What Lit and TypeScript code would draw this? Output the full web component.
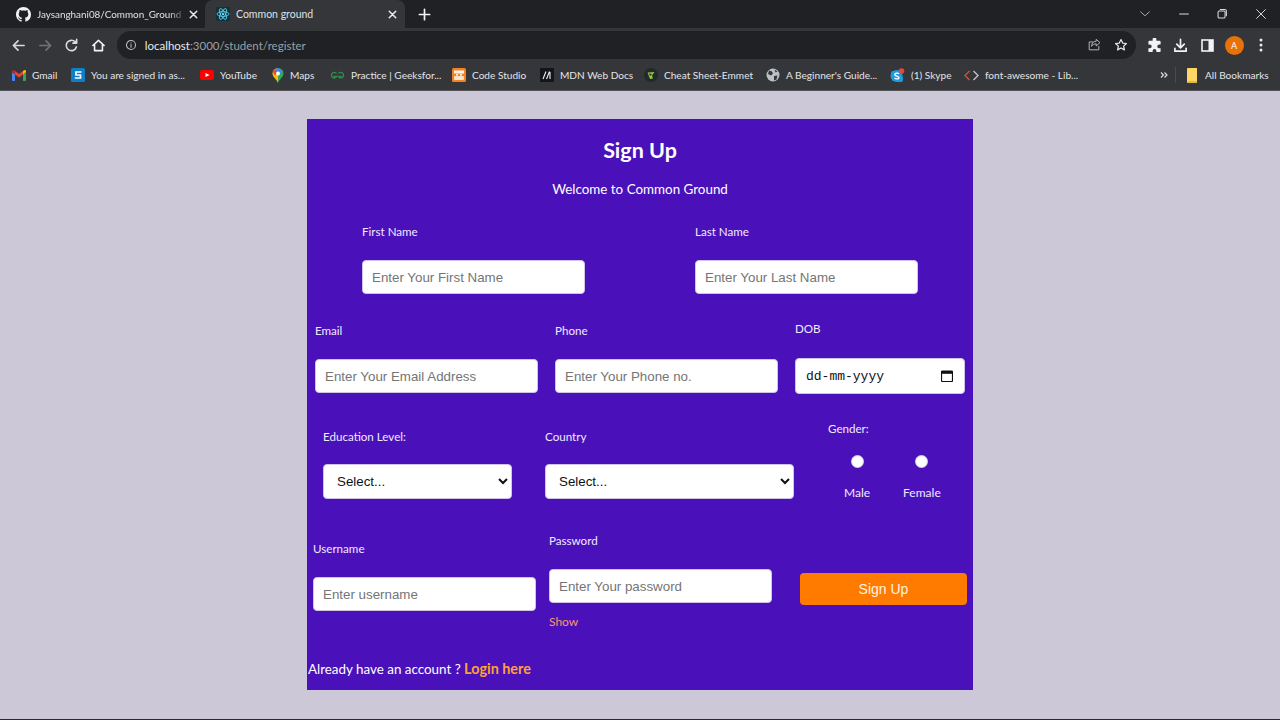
import { LitElement, html, css, svg } from 'lit';
import { customElement } from 'lit/decorators.js';

const stroke = (d: unknown, size = 16, color = '#dadce0', sw = 1.6) => html`<svg width=${size} height=${size} viewBox="0 0 16 16" fill="none" stroke=${color} stroke-width=${sw} stroke-linecap="round" stroke-linejoin="round">${d}</svg>`;

const icons = {
  github: html`<svg width="15" height="15" viewBox="0 0 16 16" fill="#f1f3f4"><path d="M8 0C3.58 0 0 3.58 0 8c0 3.54 2.29 6.53 5.47 7.59.4.07.55-.17.55-.38 0-.19-.01-.82-.01-1.49-2.01.37-2.53-.49-2.69-.94-.09-.23-.48-.94-.82-1.13-.28-.15-.68-.52-.01-.53.63-.01 1.08.58 1.23.82.72 1.21 1.87.87 2.33.66.07-.52.28-.87.51-1.07-1.78-.2-3.64-.89-3.64-3.95 0-.87.31-1.59.82-2.15-.08-.2-.36-1.02.08-2.12 0 0 .67-.21 2.2.82.64-.18 1.32-.27 2-.27s1.36.09 2 .27c1.53-1.04 2.2-.82 2.2-.82.44 1.1.16 1.92.08 2.12.51.56.82 1.27.82 2.15 0 3.07-1.87 3.75-3.65 3.95.29.25.54.73.54 1.48 0 1.07-.01 1.93-.01 2.2 0 .21.15.46.55.38A8.01 8.01 0 0 0 16 8c0-4.42-3.58-8-8-8z"/></svg>`,
  react: html`<svg width="14" height="14" viewBox="0 0 14 14"><rect width="14" height="14" fill="#14323c"/><g fill="none" stroke="#61dafb" stroke-width=".8"><ellipse cx="7" cy="7" rx="6" ry="2.4"/><ellipse cx="7" cy="7" rx="6" ry="2.4" transform="rotate(60 7 7)"/><ellipse cx="7" cy="7" rx="6" ry="2.4" transform="rotate(120 7 7)"/></g><circle cx="7" cy="7" r="1.2" fill="#61dafb"/></svg>`,
  close: stroke(svg`<path d="M4 4l8 8M12 4l-8 8"/>`, 13, '#e8eaed', 1.8),
  plus: stroke(svg`<path d="M8 2.5v11M2.5 8h11"/>`, 15, '#f1f3f4', 1.8),
  chevron: stroke(svg`<path d="M3 5.5l5 4.5 5-4.5"/>`, 14, '#a8abb0', 1.1),
  min: stroke(svg`<path d="M3 8h10"/>`, 14, '#dadce0', 1.2),
  max: stroke(svg`<rect x="3.5" y="4.5" width="8" height="8" rx="1.5"/><path d="M6 2.8h5.2a1.8 1.8 0 0 1 1.8 1.8V10"/>`, 14, '#dadce0', 1.2),
  winClose: stroke(svg`<path d="M3 3l10 10M13 3L3 13"/>`, 14, '#dadce0', 1.1),
  back: stroke(svg`<path d="M14 8H2.5M7.5 3l-5 5 5 5"/>`, 15, '#dadce0', 1.7),
  forward: stroke(svg`<path d="M2 8h11.5M8.5 3l5 5-5 5"/>`, 15, '#6f7276', 1.7),
  reload: stroke(svg`<path d="M13.2 9.5A5.5 5.5 0 1 1 12 4.3"/><path d="M13.5 1.5v4h-4" fill="#dadce0"/>`, 15, '#dadce0', 1.7),
  home: stroke(svg`<path d="M2 8l6-5.5L14 8M3.8 7v6.5h8.4V7"/>`, 15, '#f1f3f4', 1.7),
  info: stroke(svg`<circle cx="8" cy="8" r="6"/><path d="M8 7.5v3.5M8 5v.4"/>`, 12, '#bdc1c6', 1.4),
  share: stroke(svg`<path d="M13.5 9.5v4h-11v-9h4"/><path d="M14.5 5L10.5 1.5v2.2C7 3.8 5.5 6 5.2 9.5 6.5 7.5 8 6.7 10.5 6.7v2z"/>`, 14, '#b4b8bd', 1.1),
  star: stroke(svg`<path d="M8 1.8l1.9 4 4.3.5-3.2 3 .9 4.3L8 11.4l-3.9 2.2.9-4.3-3.2-3 4.3-.5z"/>`, 14, '#e8eaed', 1.4),
  puzzle: html`<svg width="15" height="15" viewBox="0 0 16 16" fill="#f1f3f4"><path d="M6 1.5a2 2 0 0 1 4 0V3h3.5a1 1 0 0 1 1 1v3H13a2 2 0 0 0 0 4h1.5v3a1 1 0 0 1-1 1H10v-1.3a2 2 0 0 0-4 0V15H2.5a1 1 0 0 1-1-1v-3.2H3a2 2 0 0 0 0-4H1.5V4a1 1 0 0 1 1-1H6z"/></svg>`,
  download: stroke(svg`<path d="M8 1.5V10M4 6.5L8 10.5l4-4M2 11v3h12v-3"/>`, 15, '#f1f3f4', 1.8),
  sidebar: html`<svg width="13" height="13" viewBox="0 0 13 13"><rect x="1" y="1" width="11" height="11" fill="none" stroke="#f1f3f4" stroke-width="1.6"/><rect x="7.5" y="1" width="4.5" height="11" fill="#f1f3f4"/></svg>`,
  dots: html`<svg width="4" height="14" viewBox="0 0 4 14" fill="#e8eaed"><circle cx="2" cy="2" r="1.5"/><circle cx="2" cy="7" r="1.5"/><circle cx="2" cy="12" r="1.5"/></svg>`,
  gmail: html`<svg width="14" height="11" viewBox="0 0 14 11"><path d="M0 2v8a1 1 0 0 0 1 1h2V4.5z" fill="#4285f4"/><path d="M14 2v8a1 1 0 0 1-1 1h-2V4.5z" fill="#34a853"/><path d="M0 2l3 2.5V1L1.8.2C1 -.3 0 .5 0 1.4z" fill="#c5221f"/><path d="M3 1v3.500L7 7.500l4-3V1L7 4z" fill="#ea4335"/><path d="M14 2l-3 2.500V1l1.200-.8c.8-.5 1.800.3 1.800 1.200z" fill="#fbbc04"/></svg>`,
  sblue: html`<svg width="14" height="14" viewBox="0 0 14 14"><rect width="14" height="14" rx="1.500" fill="#0b7fc7"/><path d="M10.500 4H5v3h4.500v3H3.800" fill="none" stroke="#fff" stroke-width="1.700"/></svg>`,
  youtube: html`<svg width="14" height="10" viewBox="0 0 14 10"><rect width="14" height="10" rx="2.500" fill="#f00"/><path d="M5.500 3l4 2-4 2z" fill="#fff"/></svg>`,
  maps: html`<svg width="12" height="15" viewBox="0 0 12 15"><path d="M6 0a5.500 5.500 0 0 1 5.500 5.500c0 3.500-4 5.500-5.500 9.500z" fill="#34a853"/><path d="M6 0A5.500 5.500 0 0 0 .5 5.500c0 3.500 4 5.500 5.500 9.500z" fill="#fbbc04"/><path d="M2 2l4-2 5 3-3 3z" fill="#4285f4"/><path d="M.8 3.500L3 1.500l3 3-3 3z" fill="#ea4335"/><circle cx="6" cy="5.500" r="2" fill="#fff"/></svg>`,
  gfg: html`<svg width="15" height="10" viewBox="0 0 15 10" fill="none" stroke="#2f8d46" stroke-width="1.300"><path d="M6.500 3.500A2.800 2.800 0 1 0 6.700 6.500H3.500M8.500 3.500A2.800 2.800 0 1 1 8.300 6.500h3.200"/></svg>`,
  codestudio: html`<svg width="14" height="14" viewBox="0 0 14 14"><rect width="14" height="14" rx="1.500" fill="#f58220"/><rect x="2" y="2.500" width="10" height="3" fill="#fff" opacity=".9"/><rect x="2" y="8" width="10" height="4" rx="1" fill="#fbe3c8"/><circle cx="5" cy="6.800" r="1" fill="#fff"/><circle cx="9" cy="6.800" r="1" fill="#fff"/></svg>`,
  mdn: html`<svg width="14" height="14" viewBox="0 0 14 14"><rect width="14" height="14" fill="#15141a"/><path d="M3 11L6 3.500M6.500 11l3-7.500M10 4v7" stroke="#f0f0f4" stroke-width="1.100" fill="none"/></svg>`,
  emmet: html`<svg width="14" height="14" viewBox="0 0 14 14"><circle cx="7" cy="7" r="7" fill="#23282b"/><path d="M3.500 4.500l7 -.5L8 7.500l1 3-3 .5z" fill="#8ec63f"/><path d="M5 5.500l3 .5-2 2z" fill="#23282b"/></svg>`,
  globe: html`<svg width="14" height="14" viewBox="0 0 14 14"><circle cx="7" cy="7" r="6.500" fill="#bdc1c6"/><path d="M3 2.500l3 1 1 2-2 2-3-1.500zM8 8l3.500-.5-1 4-2.500 1zM8.500 1.500l3 2-2 1z" fill="#35363a"/></svg>`,
  skype: html`<svg width="15" height="15" viewBox="0 0 15 15"><circle cx="6.500" cy="8" r="6" fill="#1d9be0"/><rect x="1" y="3" width="6" height="6" rx="2" fill="#1d9be0"/><rect x="6" y="8" width="7" height="6" rx="2" fill="#1d9be0"/><path d="M9 5.800C8 4.800 4.500 5 4.800 6.800 5 8.300 9.200 7.800 9 9.800 8.800 11.200 5.500 11 4.500 10" fill="none" stroke="#fff" stroke-width="1.300"/><circle cx="11.500" cy="3" r="2.800" fill="#e8453c"/></svg>`,
  code: html`<svg width="15" height="11" viewBox="0 0 15 11" fill="none" stroke-width="1.400"><path d="M5.500 1L1 5.500 5.500 10" stroke="#c2573a"/><path d="M9.500 1L14 5.500 9.500 10" stroke="#bdc1c6"/></svg>`,
  folder: html`<svg width="11" height="15" viewBox="0 0 11 15"><path d="M0 1a1 1 0 0 1 1-1h9v14a1 1 0 0 1-1 1H1a1 1 0 0 1-1-1z" fill="#fdd663"/><path d="M0 14l2-1h8v1a1 1 0 0 1-1 1H1z" fill="#e0b93f"/></svg>`,
  more: html`<svg width="8" height="8" viewBox="0 0 8 8" fill="none" stroke="#dadce0" stroke-width="1.200"><path d="M1 1.500L3.500 4 1 6.500M4.500 1.500L7 4 4.500 6.500"/></svg>`,
  calendar: html`<svg width="12" height="12" viewBox="0 0 12 12"><path d="M1.500 1h9a1 1 0 0 1 1 1v8.500a1 1 0 0 1-1 1h-9a1 1 0 0 1-1-1V2a1 1 0 0 1 1-1z" fill="none" stroke="#111" stroke-width="1.200"/><rect x=".5" y="1" width="11" height="2.800" fill="#111"/></svg>`,
};

// width is the slot from this icon to the next one
const bookmarks = [
  { icon: icons.gmail, label: 'Gmail', width: 59 },
  { icon: icons.sblue, label: 'You are signed in as...', width: 129 },
  { icon: icons.youtube, label: 'YouTube', width: 72 },
  { icon: icons.maps, label: 'Maps', width: 58 },
  { icon: icons.gfg, label: 'Practice | Geeksfor...', width: 122 },
  { icon: icons.codestudio, label: 'Code Studio', width: 88 },
  { icon: icons.mdn, label: 'MDN Web Docs', width: 104 },
  { icon: icons.emmet, label: 'Cheat Sheet-Emmet', width: 122 },
  { icon: icons.globe, label: "A Beginner's Guide...", width: 124 },
  { icon: icons.skype, label: '(1) Skype', width: 74 },
  { icon: icons.code, label: 'font-awesome - Lib...', width: 120 },
];

@customElement('app-root')
export class AppRoot extends LitElement {
  static styles = css`
    :host {
      display: flex;
      flex-direction: column;
      height: 720px;
      overflow: hidden;
      background: #cdc8d7;
      font-family: Lato, 'Open Sans', sans-serif;
      box-shadow: inset 0 -1px 0 #2a2a2e;
    }

    /* browser chrome */
    .tabstrip {
      display: flex;
      align-items: center;
      height: 28px;
      background: #202124;
      color: #dee1e6;
      font-size: 10.5px;
    }
    .tab {
      display: flex;
      align-items: center;
      height: 28px;
      box-sizing: border-box;
    }
    .tab-idle { width: 205px; padding: 0 5px 0 16px; }
    .tab-active {
      width: 200px;
      padding: 0 6px 0 11px;
      background: #35363a;
      border-radius: 8px 8px 0 0;
    }
    .tab-title {
      flex: 1;
      margin-left: 6px;
      white-space: nowrap;
    }
    .tab-idle .tab-title {
      font-size: 9.9px;
      -webkit-mask-image: linear-gradient(90deg, #000 88%, transparent);
      mask-image: linear-gradient(90deg, #000 88%, transparent);
    }
    .new-tab { margin-left: 12px; display: flex; }
    .win-controls { margin-left: auto; display: flex; }
    .win-btn { width: 38.5px; display: flex; justify-content: center; }

    .toolbar {
      display: flex;
      align-items: center;
      height: 34px;
      padding-left: 5px;
      background: #35363a;
    }
    .tool-btn {
      width: 26.7px;
      display: flex;
      justify-content: center;
      align-items: center;
    }
    .omnibox {
      display: flex;
      align-items: center;
      width: 1019px;
      height: 28px;
      margin-left: 5px;
      box-sizing: border-box;
      padding: 0 8px;
      border-radius: 14px;
      background: #202124;
      font-size: 11.5px;
      color: #9aa0a6;
    }
    .url { margin-left: 8px; }
    .url b { font-weight: 400; color: #e8eaed; }
    .omni-end { margin-left: auto; display: flex; gap: 13px; }
    .tools-end { display: flex; align-items: center; margin-left: 5px; }
    .avatar {
      width: 19px;
      height: 19px;
      border-radius: 50%;
      background: #e8710a;
      color: #fff;
      font-size: 9px;
      display: flex;
      align-items: center;
      justify-content: center;
    }

    .bookmarks {
      display: flex;
      align-items: center;
      height: 28px;
      padding: 0 0 2px 12px;
      box-sizing: border-box;
      background: #35363a;
      box-shadow: 0 1px 0 #55565a;
      color: #e3e5e8;
      font-size: 10.1px;
    }
    .bm {
      display: flex;
      align-items: center;
      gap: 6px;
      white-space: nowrap;
      overflow: hidden;
      flex: none;
    }
    .bm svg { flex: none; }
    .bm-more { margin-left: 76px; display: flex; }
    .bm-sep { width: 1px; height: 16px; margin-left: 7px; background: #4a4b4f; }
    .bm-all { display: flex; align-items: center; gap: 7px; margin-left: 11px; }

    /* page */
    .page {
      flex: 1;
      display: flex;
      justify-content: center;
      align-items: flex-start;
      padding-top: 29px;
    }
    .card {
      width: 666px;
      height: 571px;
      background: #4a11bb;
      color: #fff;
      display: flex;
      flex-direction: column;
    }
    .title {
      margin: 18px 0 0;
      font-size: 21.5px;
      line-height: 27px;
      font-weight: 700;
      text-align: center;
    }
    .welcome {
      margin: 15px 0 0;
      font-size: 13.4px;
      line-height: 20px;
      text-align: center;
    }
    .row { display: flex; align-items: flex-start; }
    .row-name { margin-top: 23px; padding-left: 55px; gap: 110px; }
    .row-contact { margin-top: 25px; padding-left: 8px; gap: 17px; }
    .row-meta { margin-top: 25px; padding-left: 16px; }
    .row-account { margin-top: 28px; padding-left: 6px; }

    .field { display: flex; flex-direction: column; width: 223px; }
    .field label, .gender-label {
      font-size: 11.6px;
      line-height: 20px;
      color: #f1e9ff;
    }
    .field label { margin-bottom: 18px; }
    .low { margin-top: 2px; }
    .low-8 { margin-top: 8px; }
    .dob label { margin-bottom: 19px; }
    .edu label, .country label { margin-bottom: 17px; }

    input[type='text'], input[type='password'], select, .date {
      box-sizing: border-box;
      width: 100%;
      height: 34px;
      margin: 0;
      padding: 0 9px;
      border: 1px solid #cfc4e8;
      border-radius: 4px;
      background: #fff;
      font-family: 'Liberation Sans', Arial, sans-serif;
      font-size: 13.33px;
      color: #111;
      outline: none;
    }
    input::placeholder { color: #757575; opacity: 1; }
    select { height: 35px; }
    .date {
      height: 36px;
      display: flex;
      align-items: center;
      justify-content: space-between;
      padding: 0 11px 0 10px;
      font-family: 'Liberation Mono', monospace;
      font-size: 13px;
    }

    .edu { width: 189px; }
    .country { width: 249px; margin-left: 33px; }
    .dob { width: 170px; }
    .gender { margin-left: 34px; display: flex; flex-direction: column; }
    .options { display: flex; gap: 33px; margin: 17px 0 0 16px; }
    .option {
      display: flex;
      flex-direction: column;
      align-items: center;
      gap: 16px;
      font-size: 12px;
      line-height: 20px;
      color: #f1e9ff;
    }
    .option input {
      appearance: none;
      width: 11px;
      height: 11px;
      margin: 0;
      border-radius: 50%;
      background: #fff;
      box-shadow: 0 0 0 1px #d8cdf0;
    }
    .password { margin-left: 13px; }
    .show {
      margin-top: 9px;
      font-size: 12px;
      line-height: 20px;
      color: #f59a6a;
    }
    .signup {
      width: 167px;
      height: 32px;
      margin: 42px 0 0 28px;
      border: none;
      border-radius: 4px;
      background: #ff7b00;
      color: #fff3e6;
      font-family: 'Liberation Sans', Arial, sans-serif;
      font-size: 14px;
    }
    .login {
      margin: 27px 0 0 1px;
      font-size: 13.4px;
      line-height: 20px;
    }
    .login a { color: #ffa033; font-weight: 700; font-size: 14.4px; text-decoration: none; }
  `;

  render() {
    return html`
      <div class="tabstrip">
        <div class="tab tab-idle">
          ${icons.github}
          <span class="tab-title">Jaysanghani08/Common_Ground</span>
          ${icons.close}
        </div>
        <div class="tab tab-active">
          ${icons.react}
          <span class="tab-title">Common ground</span>
          ${icons.close}
        </div>
        <div class="new-tab">${icons.plus}</div>
        <div class="win-controls">
          <span class="win-btn">${icons.chevron}</span>
          <span class="win-btn">${icons.min}</span>
          <span class="win-btn">${icons.max}</span>
          <span class="win-btn">${icons.winClose}</span>
        </div>
      </div>

      <div class="toolbar">
        <span class="tool-btn">${icons.back}</span>
        <span class="tool-btn">${icons.forward}</span>
        <span class="tool-btn">${icons.reload}</span>
        <span class="tool-btn">${icons.home}</span>
        <div class="omnibox">
          ${icons.info}
          <span class="url"><b>localhost</b>:3000/student/register</span>
          <span class="omni-end">${icons.share}${icons.star}</span>
        </div>
        <div class="tools-end">
          <span class="tool-btn">${icons.puzzle}</span>
          <span class="tool-btn">${icons.download}</span>
          <span class="tool-btn">${icons.sidebar}</span>
          <span class="tool-btn"><span class="avatar">A</span></span>
          <span class="tool-btn">${icons.dots}</span>
        </div>
      </div>

      <div class="bookmarks">
        ${bookmarks.map(
          (b) => html`<span class="bm" style="width:${b.width}px">${b.icon}${b.label}</span>`,
        )}
        <span class="bm-more">${icons.more}</span>
        <span class="bm-sep"></span>
        <span class="bm-all">${icons.folder}All Bookmarks</span>
      </div>

      <main class="page">
        <form class="card" @submit=${(e: Event) => e.preventDefault()}>
          <h1 class="title">Sign Up</h1>
          <p class="welcome">Welcome to Common Ground</p>

          <div class="row row-name">
            <div class="field">
              <label>First Name</label>
              <input type="text" placeholder="Enter Your First Name" />
            </div>
            <div class="field">
              <label>Last Name</label>
              <input type="text" placeholder="Enter Your Last Name" />
            </div>
          </div>

          <div class="row row-contact">
            <div class="field low">
              <label>Email</label>
              <input type="text" placeholder="Enter Your Email Address" />
            </div>
            <div class="field low">
              <label>Phone</label>
              <input type="text" placeholder="Enter Your Phone no." />
            </div>
            <div class="field dob">
              <label>DOB</label>
              <div class="date">dd-mm-yyyy ${icons.calendar}</div>
            </div>
          </div>

          <div class="row row-meta">
            <div class="field edu low-8">
              <label>Education Level:</label>
              <select><option>Select...</option></select>
            </div>
            <div class="field country low-8">
              <label>Country</label>
              <select><option>Select...</option></select>
            </div>
            <div class="gender">
              <span class="gender-label">Gender:</span>
              <div class="options">
                <label class="option"><input type="radio" name="gender" />Male</label>
                <label class="option"><input type="radio" name="gender" />Female</label>
              </div>
            </div>
          </div>

          <div class="row row-account">
            <div class="field low-8">
              <label>Username</label>
              <input type="text" placeholder="Enter username" />
            </div>
            <div class="field password">
              <label>Password</label>
              <input type="password" placeholder="Enter Your password" />
              <span class="show">Show</span>
            </div>
            <button class="signup">Sign Up</button>
          </div>

          <p class="login">Already have an account ? <a href="#">Login here</a></p>
        </form>
      </main>
    `;
  }
}

declare global {
  interface HTMLElementTagNameMap {
    'app-root': AppRoot;
  }
}
